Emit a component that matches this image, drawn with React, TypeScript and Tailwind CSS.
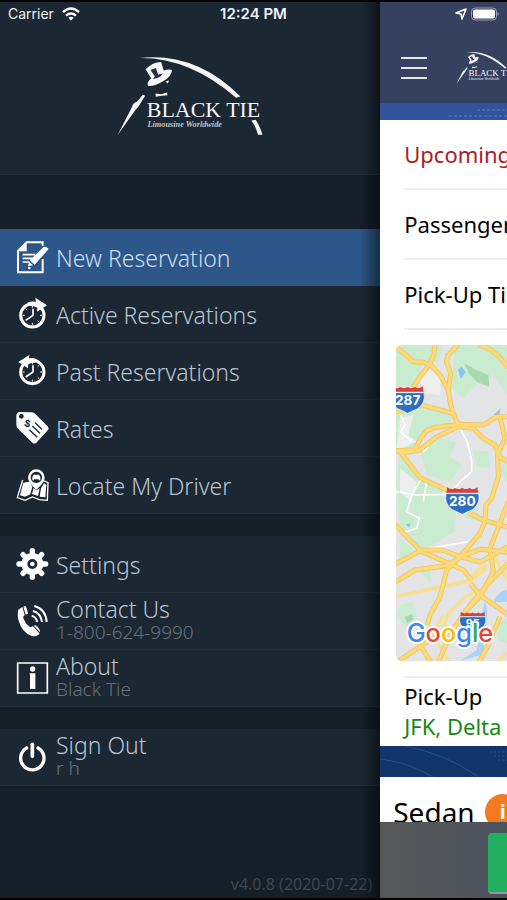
import type { ReactNode } from "react";

function Logo({ className }: { className: string }) {
  return (
    <svg viewBox="350 165 450 250" className={className} role="img" aria-label="Black Tie Limousine Worldwide" fill="#f3f6f8">
      <path d="M420 174Q590 155 724 290L711 294Q570 172 420 174Z" />
      <path d="M757 362L770 360Q785 385 790 405H777Q771 382 757 362Z" />
      <path d="M354 406L398 320Q400 310 412 306L430 285L437 288L416 322L408 330Z" />
      <path d="M438 208Q460 186 485 186L493 212Q508 206 518 210Q516 230 492 243Q465 260 446 258Q440 248 455 235Z" />
      <path d="M453 210L469 204L476 224L490 221Q482 235 461 237L466 229Z" fill="#26323f" />
      <path d="M498 245L509 242L505 251Z" />
      <path d="M468 281L484 283L503 278L504 286L487 288L469 291Z" />
      <text x="442" y="351" fontSize="66" fontFamily="'Liberation Serif', serif">BLACK TIE</text>
      <text x="444" y="382" fontSize="25" fontStyle="italic" fontWeight="bold" fillOpacity="0.75" fontFamily="'Liberation Serif', serif">Limousine Worldwide</text>
    </svg>
  );
}

function Icon({ box, children }: { box: string; children: ReactNode }) {
  return (
    <svg viewBox={box} className="h-8 w-8 shrink-0 overflow-visible" fill="#fff" aria-hidden="true">
      {children}
    </svg>
  );
}

function ClockFace() {
  return (
    <>
      <circle cx="97" cy="82" r="35" fill="none" stroke="#fff" strokeWidth="9" />
      <path d="M99 62V82L77 97" fill="none" stroke="#fff" strokeWidth="5" />
      <path d="M97 53v6M97 105v6M68 82h6M120 82h6M77 62l4 4M117 102l-4-4M117 62l-4 4" stroke="#fff" strokeWidth="3" />
    </>
  );
}

const icons = {
  create: (
    <Icon box="48 244 96 96">
      <path d="M128 258V248H80L54 274V338H128V298" fill="none" stroke="#fff" strokeWidth="6" />
      <path d="M80 247V275H53Z" />
      <path d="M68 285h38M68 296h29M68 307h20" stroke="#fff" strokeWidth="5" />
      <path d="M131 262Q138 259 146 268L104 315L89 302ZM88 306L99 317L83 320Z" />
      <circle cx="88" cy="325" r="4" />
    </Icon>
  ),
  active: (
    <Icon box="48 30 96 96">
      <ClockFace />
      <path d="M106 29L141 52L111 71L112 59Q102 53 90 54L82 44Q94 39 108 41Z" />
    </Icon>
  ),
  past: (
    <Icon box="48 31 96 96">
      <ClockFace />
      <path d="M89 30L55 52L84 71L84 60Q94 52 105 55L111 44Q97 38 86 41Z" />
    </Icon>
  ),
  rates: (
    <Icon box="48 202 96 96">
      <path fillRule="evenodd" d="M59 202L96 203Q102 204 106 208L144 246Q148 251 144 256L109 294Q103 299 97 294L54 252Q49 247 49 240V212Q50 203 59 202ZM64 208a7 7 0 1 0 .1 0Z" />
      <text x="74" y="247" fontSize="31" fontWeight="bold" fill="#1b2733" fontFamily="'Liberation Sans', sans-serif" transform="rotate(16 84 237)">$</text>
      <path d="M105 234l21 20M97 244l23 22M88 255l24 23" stroke="#1b2733" strokeWidth="4" />
    </Icon>
  ),
  locate: (
    <Icon box="48 373 96 96">
      <path d="M68 406L52 459L75 467L97 457L118 465L142 467L144 414L130 408" fill="none" stroke="#fff" strokeWidth="4" />
      <path d="M70 414L88 411L97 426L91 449L75 456L60 452ZM132 416L139 420L136 458L119 456L123 431ZM96 448L101 430L110 437L119 431L114 454Z" />
      <path fillRule="evenodd" d="M109 374a25 25 0 0 1 25 25Q134 413 109 435Q84 413 84 399a25 25 0 0 1 25-25ZM109 381a17 17 0 1 0 .1 0Z" />
      <path d="M97 397L101 390H117L121 397V407H116V404H102V407H97Z" />
    </Icon>
  ),
  settings: (
    <Icon box="48 55 96 96">
      <circle cx="97" cy="103" r="24" fill="none" stroke="#fff" strokeWidth="18" />
      <path d="M97 63V70M97 136V143M57 103H64M130 103H137M69 75L74 80M120 126L125 131M69 131L74 126M120 80L125 75" stroke="#fff" strokeWidth="16" strokeLinecap="round" />
      <circle cx="97" cy="103" r="7" />
    </Icon>
  ),
  contact: (
    <Icon box="48 226 96 96">
      <path d="M55 240L67 232L74 256L69 262Q75 282 91 293L99 290L119 312Q108 323 95 319Q65 307 56 273Q51 254 55 240Z" />
      <path d="M70 231L75 229Q80 230 84 252L77 255ZM101 288L107 287Q121 298 120 308Z" />
      <path d="M95 258Q110 263 111 277M99 244Q123 250 126 277M103 229Q137 238 140 277" fill="none" stroke="#fff" strokeWidth="6" />
    </Icon>
  ),
  about: (
    <Icon box="48 396 96 96">
      <path d="M53 399H142V489H53Z" fill="none" stroke="#fff" strokeWidth="5" />
      <circle cx="98" cy="417" r="8" />
      <path d="M89 430H106V477H90V434H89Z" />
    </Icon>
  ),
  power: (
    <Icon box="48 93 96 96">
      <path d="M80 114A35 35 0 1 0 114 114" fill="none" stroke="#fff" strokeWidth="10" strokeLinecap="round" />
      <path d="M97 103V139" stroke="#fff" strokeWidth="11" strokeLinecap="round" />
    </Icon>
  ),
};

interface ItemProps {
  icon: ReactNode;
  title: string;
  detail?: string;
  selected?: boolean;
}

function Item({ icon, title, detail, selected }: ItemProps) {
  return (
    <li>
      <button
        type="button"
        className={`flex h-[57px] w-full items-center gap-2 border-b px-4 text-left font-light ${
          selected ? "border-[#2c5788] bg-[#2c5788] text-[#cddcf0]" : "border-[#23303b] bg-[#1b2733] text-[#b9c4d0]"
        }`}
      >
        {icon}
        <span className={detail ? "flex flex-col pb-0.5" : "flex flex-col pt-px"}>
          <span className="text-[23px] leading-6">{title}</span>
          {detail && <span className="text-[19px] leading-[22px] text-[#66717c]">{detail}</span>}
        </span>
      </button>
    </li>
  );
}

function Shield({ x, y, label }: { x: number; y: number; label: string }) {
  return (
    <g transform={`translate(${x} ${y})`}>
      <path d="M-46-40Q-30-30-23-38Q-10-31 0-38Q10-31 23-38Q30-30 46-40Q45-30 48-24H-48Q-45-30-46-40Z" fill="#d6403d" />
      <path d="M-49-21H49Q55 10 30 27Q15 33 0 41Q-15 33-30 27Q-55 10-49-21Z" fill="#2d6fc4" stroke="#fff" strokeWidth="2" />
      <text y="17" textAnchor="middle" fontSize="41" fontWeight="700" fill="#fff" fontFamily="Inter, sans-serif">{label}</text>
    </g>
  );
}

const highways = [
  "M40 30L80 62L100 80L130 82L152 90L180 120L205 165L212 210L225 250L240 275",
  "M165 25L162 55L150 87L120 125L98 160",
  "M235 28L205 60L199 80L212 115L206 160",
  "M295 28L325 40L355 62L385 98",
  "M45 230L130 211L222 236",
  "M45 348L105 344L122 310L140 287L168 277L240 268L310 270L350 245L385 245",
  "M45 346L80 352L120 345L170 305L235 275L280 280L310 310L345 330L362 368L385 382",
  "M60 350L120 428L200 465L250 490",
  "M360 248L375 310L352 360L355 425L335 490L318 510L315 560L300 595L240 665L200 705L180 785L150 840L142 870",
  "M45 567L75 600L125 650L200 682L250 705L275 735",
  "M45 688L125 645L185 645L240 665L300 681L385 635",
  "M45 742L105 705L200 692L250 662L300 643L385 652",
  "M265 533L310 555L385 577",
  "M385 500L352 585L330 640L340 710L300 785L255 830",
  "M270 745L300 780L385 840",
  "M385 685L320 750L270 810L215 890L175 980",
  "M45 985L130 928L180 900",
  "M110 915L155 985M360 845L325 930L295 985",
];

const streets = [
  "M45 785L180 756L275 735L318 700",
  "M275 735L290 705L320 690M285 770L250 790L205 835L190 880",
  "M375 300L385 305M330 640L385 740",
  "M190 840L160 905L210 985M350 985L385 950",
];

function RouteMap() {
  return (
    <svg
      viewBox="48 30 333 948"
      preserveAspectRatio="xMinYMin slice"
      className="h-[316px] w-full rounded-l-md"
      role="img"
      aria-label="Route map"
    >
      <path d="M48 30H1000V978H48Z" fill="#e3e4e5" />
      <g fill="#c9ecd0">
        <path d="M48 30H190L175 80L130 85L100 150L48 155Z" />
        <path d="M225 30H381V180L340 120L290 150L250 190L215 160L220 90Z" />
        <path d="M48 230L150 210L215 235L210 265L140 280L100 345L48 335Z" />
        <path d="M60 360L110 430L190 465L195 540L180 620L125 640L60 570L48 440Z" />
        <path d="M120 340L180 310L230 320L210 365L245 390L210 440L140 420Z" />
        <path d="M280 345L325 350L330 400L290 395ZM365 380L381 390V440L360 410Z" />
        <path d="M135 500H230L225 590L160 625L130 580Z" />
        <path d="M60 610L110 650L60 690ZM60 810L100 800L110 850L75 875L50 840ZM240 500L290 510L300 560L250 545ZM120 700L155 700L150 745L130 720ZM350 870L381 850V925L355 915Z" />
      </g>
      <path d="M252 85L290 105L325 120L328 155L295 143L270 120Z" fill="#a7d9b0" />
      <path d="M75 845l20-8 5 18-18 10Z" fill="#a7d9b0" />
      <path d="M150 90L185 130L180 180L140 175L120 140ZM60 250L100 240L85 300L110 320L50 345ZM60 400L110 440L95 500L60 470Z" fill="#edefee" />
      <path d="M234 105L245 95L257 112L242 132ZM340 240L362 220L358 240ZM195 55l10 3-4 10ZM78 568l14-4-4 14Z" fill="#8fc4f8" />
      <path d="M340 795L360 773L385 762V800L345 802ZM315 795L322 830L318 870L300 900L320 955L240 978L290 945L308 830Z" fill="#a9d3fa" />
      <g fill="none" stroke="#fff" strokeWidth="5" strokeLinejoin="round">
        <path d="M240 280L262 320L275 375V410L245 435L215 470M48 470L110 480L200 478M125 430L95 480L80 530L118 550L110 580L70 592M140 440L130 500M150 640L265 620M62 240L75 270L62 290L95 320M130 350L145 335" />
      </g>
      <g fill="none" strokeLinejoin="round">
        {streets.map((d) => <path key={d} d={d} stroke="#f9df90" strokeWidth="10" />)}
        {highways.map((d) => <path key={d} d={d} stroke="#efc566" strokeWidth="15" />)}
        {highways.map((d) => <path key={d} d={d} stroke="#fdd978" strokeWidth="10" />)}
      </g>
      <Shield x={83} y={194} label="287" />
      <Shield x={247} y={497} label="280" />
      <g transform="translate(278 862) scale(.78)">
        <Shield x={0} y={0} label="95" />
      </g>
      <text x="80" y="922" fontSize="76" fontWeight="500" fontFamily="Inter, sans-serif" stroke="#fff" strokeWidth="12" strokeLinejoin="round" paintOrder="stroke">
        <tspan fill="#4285f4">G</tspan>
        <tspan fill="#ea4335">o</tspan>
        <tspan fill="#fbbc05">o</tspan>
        <tspan fill="#4285f4">g</tspan>
        <tspan fill="#34a853">l</tspan>
        <tspan fill="#ea4335">e</tspan>
      </text>
    </svg>
  );
}

function StatusBar() {
  return (
    <div className="absolute inset-x-0 top-0 z-20 grid grid-cols-3 items-center border-t-2 border-black px-2 py-1 font-[Inter,sans-serif] text-[14px] leading-4 text-[#eef1f4]">
      <span className="flex items-center gap-2">
        <span>Carrier</span>
        <svg viewBox="0 0 18 14" className="h-3.5 w-[18px]" fill="none" stroke="#fff" strokeWidth="2.4" aria-hidden="true">
          <path d="M1 5.2Q9-2 17 5.2M4 8.6Q9 4.4 14 8.6" />
          <path d="M6.3 10.8Q9 8.8 11.7 10.8L9 13.6Z" fill="#fff" stroke="none" />
        </svg>
      </span>
      <span className="text-center text-[15px] font-semibold">12:24 PM</span>
      <span className="flex items-center justify-end gap-1">
        <svg viewBox="0 0 12 12" className="h-3 w-3" fill="none" stroke="#fff" strokeWidth="1.6" strokeLinejoin="round" aria-hidden="true">
          <path d="M11 1L7 11L6 6L1 5Z" />
        </svg>
        <svg viewBox="0 0 28 14" className="h-3.5 w-7" aria-hidden="true">
          <rect x="0.5" y="1" width="25" height="12" rx="3.5" fill="none" stroke="#9aa2b4" />
          <rect x="2" y="2.5" width="22" height="9" rx="2" fill="#fff" />
          <path d="M26.5 5Q29 7 26.5 9Z" fill="#9aa2b4" />
        </svg>
      </span>
    </div>
  );
}

function Sidebar() {
  return (
    <aside className="relative flex w-3/4 shrink-0 flex-col bg-[#151f28]">
      <header className="flex h-[175px] shrink-0 justify-center border-b border-[#26333f] bg-[#1b2733] pt-[55px] pl-0.5">
        <Logo className="h-[83px] w-[150px]" />
      </header>
      <nav className="flex flex-col gap-[22px] pt-[54px]" aria-label="Main menu">
        <ul>
          <Item icon={icons.create} title="New Reservation" selected />
          <Item icon={icons.active} title="Active Reservations" />
          <Item icon={icons.past} title="Past Reservations" />
          <Item icon={icons.rates} title="Rates" />
          <Item icon={icons.locate} title="Locate My Driver" />
        </ul>
        <ul>
          <Item icon={icons.settings} title="Settings" />
          <Item icon={icons.contact} title="Contact Us" detail="1-800-624-9990" />
          <Item icon={icons.about} title="About" detail="Black Tie" />
        </ul>
        <ul>
          <Item icon={icons.power} title="Sign Out" detail="r h" />
        </ul>
      </nav>
      <p className="mt-auto pr-2 pb-1 text-right text-[16px] leading-5 text-[#3d4751]">v4.0.8 (2020-07-22)</p>
      <div className="pointer-events-none absolute inset-y-0 right-0 w-5 bg-linear-to-r from-transparent to-black/50" />
    </aside>
  );
}

function Reservation() {
  return (
    <main className="flex min-w-0 flex-1 flex-col overflow-hidden bg-white whitespace-nowrap text-black">
      <header className="flex h-[103px] shrink-0 items-center gap-7 bg-[#35415f] pt-8 pl-5">
        <button type="button" aria-label="Toggle menu" className="flex w-7 shrink-0 flex-col gap-2 px-px">
          <span className="h-0.5 bg-[#e3e6ec]" />
          <span className="h-0.5 bg-[#e3e6ec]" />
          <span className="h-0.5 bg-[#e3e6ec]" />
        </button>
        <Logo className="h-[34px] w-[61px] shrink-0" />
      </header>
      <div className="flex h-[17px] shrink-0 justify-end bg-[#34529b]">
        <svg viewBox="0 0 58 17" className="h-[17px] w-[58px]" fill="none" stroke="#4169b2" strokeWidth="2" strokeDasharray="3 2" aria-hidden="true">
          <path d="M28 7H58M0 13H58" />
        </svg>
      </div>
      <div className="flex flex-col pl-6 text-[22px]">
        <h1 className="flex h-[70px] items-center border-b-2 border-[#eeeef0] text-[#ab2023]">Upcoming</h1>
        <p className="flex h-[70px] items-center border-b-2 border-[#eeeef0]">Passenger</p>
        <p className="flex h-[70px] items-center border-b-2 border-[#eeeef0]">Pick-Up Time</p>
      </div>
      <div className="pt-[15px] pl-4">
        <RouteMap />
      </div>
      <div className="pt-[15px] pl-6">
        <div className="h-[70px] border-t-2 border-[#eeeef0] pt-[3px] text-[22px] leading-[30px]">
          <p>Pick-Up</p>
          <p className="text-[#128a12]">JFK, Delta</p>
        </div>
      </div>
      <div className="h-[31px] shrink-0 bg-[#12356b]">
        <svg viewBox="0 0 127 31" className="h-full w-full" preserveAspectRatio="xMinYMin slice" fill="none" stroke="#2a5288" aria-hidden="true">
          <path d="M0 13Q28 16 53 31M25 0Q65 8 94 28L98 31" />
          <path d="M110 6H127M114 10H127M118 14H127" strokeDasharray="2 2" />
        </svg>
      </div>
      <div className="flex h-[45px] shrink-0 items-start gap-2.5 overflow-hidden pt-[17px] pl-[13px]">
        <h2 className="text-[28px] leading-9">Sedan</h2>
        <button type="button" aria-label="Sedan details" className="flex h-9 w-9 shrink-0 items-center justify-center rounded-full bg-[#f27b1f] text-[20px] font-bold text-white">
          i
        </button>
      </div>
      <footer className="flex flex-1 justify-end bg-linear-to-r from-[#575757] to-[#4b535e] pt-[11px] pb-1">
        <button type="button" aria-label="Continue" className="w-[19px] rounded-l-sm border-b-2 border-[#8f9a9a] bg-[#22b060]" />
      </footer>
    </main>
  );
}

export default function App() {
  return (
    <div className="relative flex h-screen min-h-[900px] overflow-hidden border-b-2 border-black bg-black font-['Noto_Sans',sans-serif]">
      <StatusBar />
      <Sidebar />
      <Reservation />
    </div>
  );
}
